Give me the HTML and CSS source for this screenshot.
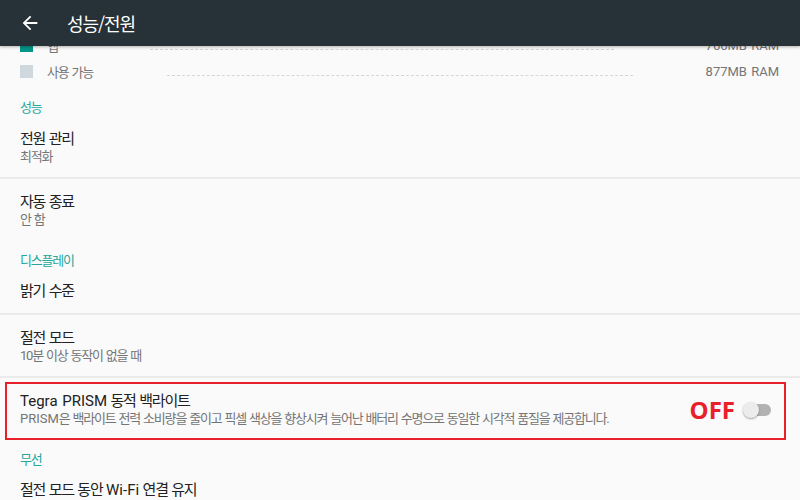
FILE: index.html
```html
<!DOCTYPE html>
<html lang="ko">
<head>
    <meta charset="UTF-8">
    <title>성능/전원</title>
    <link rel="stylesheet" href="styles.css">
</head>
<body>
    <div class="toolbar">
        <svg class="back" width="22" height="22" viewBox="0 0 24 24">
            <path d="M20 11H7.83l5.59-5.59L12 4l-8 8 8 8 1.41-1.41L7.83 13H20v-2z" fill="#fff"/>
        </svg>
        <div class="toolbar-title">성능/전원</div>
    </div>

    <div class="content">
        <div class="legend">
            <div class="legend-row">
                <span class="swatch used"></span>
                <span class="legend-label">앱</span>
                <span class="legend-line apps"></span>
                <span class="legend-value latin">766MB RAM</span>
            </div>
            <div class="legend-row">
                <span class="swatch free"></span>
                <span class="legend-label">사용 가능</span>
                <span class="legend-line avail"></span>
                <span class="legend-value latin">877MB RAM</span>
            </div>
        </div>

        <div class="category">성능</div>
        <div class="pref divided">
            <div class="pref-text">
                <div class="pref-title">전원 관리</div>
                <div class="pref-summary">최적화</div>
            </div>
        </div>
        <div class="pref">
            <div class="pref-text">
                <div class="pref-title">자동 종료</div>
                <div class="pref-summary">안 함</div>
            </div>
        </div>

        <div class="category">디스플레이</div>
        <div class="pref single divided">
            <div class="pref-text">
                <div class="pref-title">밝기 수준</div>
            </div>
        </div>
        <div class="pref divided">
            <div class="pref-text">
                <div class="pref-title">절전 모드</div>
                <div class="pref-summary">10분 이상 동작이 없을 때</div>
            </div>
        </div>
        <div class="pref marked">
            <div class="pref-text">
                <div class="pref-title"><span class="latin">Tegra PRISM</span> 동적 백라이트</div>
                <div class="pref-summary"><span class="latin">PRISM</span>은 백라이트 전력 소비량을 줄이고 픽셀 색상을 향상시켜 늘어난 배터리 수명으로 동일한 시각적 품질을 제공합니다.</div>
            </div>
            <span class="off-label">OFF</span>
            <span class="switch"><span class="thumb"></span></span>
            <div class="highlight"></div>
        </div>

        <div class="category">무선</div>
        <div class="pref single">
            <div class="pref-text">
                <div class="pref-title">절전 모드 동안 <span class="latin">Wi-Fi</span> 연결 유지</div>
            </div>
        </div>
    </div>
</body>
</html>
```

FILE: styles.css
```css
html, body {
    margin: 0;
    height: 100%;
    overflow: hidden;
}
body {
    font-family: Roboto, "Noto Sans CJK KR", sans-serif;
    letter-spacing: -0.075em;
    word-spacing: 0.06em;
    background-color: #fafafa;
    color: #212121;
}
.latin {
    letter-spacing: 0;
}
.toolbar {
    position: relative;
    z-index: 2;
    height: 46px;
    background-color: #263238;
    display: flex;
    align-items: center;
    box-shadow: 0 1px 3px rgba(0,0,0,0.3);
}
.back {
    margin-left: 19px;
    margin-right: 26px;
}
.toolbar-title {
    color: #fff;
    font-size: 18px;
    letter-spacing: -0.06em;
    font-family: "Noto Sans CJK KR", sans-serif;
}
.content {
    margin-top: -14px;
}
.legend {
    padding-bottom: 3px;
}
.legend-row {
    display: flex;
    align-items: center;
    height: 26px;
    padding: 0 21px 0 20px;
    font-size: 13px;
    color: #757575;
}
.swatch {
    width: 13px;
    height: 13px;
    margin-right: 14px;
}
.swatch.used {
    background-color: #009688;
}
.swatch.free {
    background-color: #cfd8dc;
}
.legend-label {
    width: 100px;
}
.legend-line {
    flex: 1;
    height: 0;
    border-top: 1px dashed #d6d6d6;
    margin-top: 8px;
}
.legend-line.apps {
    margin-left: 3px;
    margin-right: 92px;
}
.legend-line.avail {
    margin-left: 20px;
    margin-right: 73px;
}
.legend-value {
    white-space: nowrap;
}
.category {
    height: 29px;
    box-sizing: border-box;
    padding: 12px 20px 0;
    font-size: 13px;
    line-height: 17px;
    color: #26a69a;
}
.pref {
    position: relative;
    display: flex;
    align-items: center;
    padding: 14px 29px 12px 20px;
}
.pref.divided {
    border-bottom: 2px solid #ebebeb;
}
.pref.single {
    padding-top: 13px;
    padding-bottom: 13px;
}
.pref-text {
    flex: 1;
}
.pref-title {
    font-size: 15px;
    line-height: 18px;
}
.pref-summary {
    font-size: 13px;
    line-height: 17px;
    color: #757575;
}
.off-label {
    font-family: "Open Sans", sans-serif;
    font-weight: bold;
    font-size: 24px;
    line-height: 28px;
    letter-spacing: 0;
    color: #e8202a;
    margin-right: 8px;
}
.switch {
    position: relative;
    width: 28px;
    height: 12px;
    margin-top: 1px;
}
.switch::before {
    content: "";
    position: absolute;
    left: 6px;
    right: 0;
    top: 0;
    bottom: 0;
    border-radius: 6px;
    background-color: #b2b2b2;
}
.thumb {
    position: absolute;
    left: 0;
    top: -2px;
    width: 16px;
    height: 16px;
    border-radius: 50%;
    background-color: #ececec;
    box-shadow: 0 1px 2px rgba(0,0,0,0.35);
}
.highlight {
    position: absolute;
    top: 4px;
    bottom: -1px;
    left: 5px;
    right: 14px;
    border: 2px solid #e8202a;
    pointer-events: none;
}
```
